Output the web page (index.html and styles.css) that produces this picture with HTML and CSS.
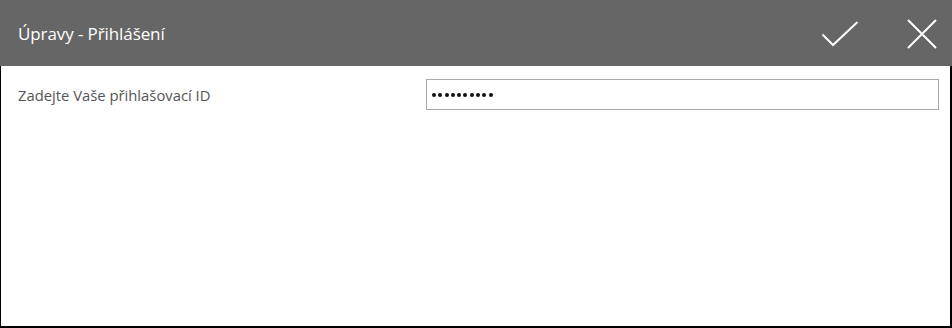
FILE: index.html
```html
<!DOCTYPE html>
<html lang="cs">
<head>
<meta charset="utf-8">
<link rel="stylesheet" href="styles.css">
</head>
<body>
<div class="dialog">
  <header class="bar">
    <h1 class="title">Úpravy - Přihlášení</h1>
    <div class="actions">
      <button class="btn" aria-label="OK">
        <svg width="38" height="26" viewBox="0 0 38 26"><path d="M1.5 13.5 L12 24 L36.5 1" fill="none" stroke="#fff" stroke-width="2"/></svg>
      </button>
      <button class="btn" aria-label="Zavřít">
        <svg width="30" height="30" viewBox="0 0 30 30"><path d="M1 1 L29 29 M29 1 L1 29" fill="none" stroke="#fff" stroke-width="2"/></svg>
      </button>
    </div>
  </header>
  <main class="content">
    <div class="row">
      <label class="label" for="pw">Zadejte Vaše přihlašovací ID</label>
      <div class="field" id="pw">
        <span class="dot"></span><span class="dot"></span><span class="dot"></span><span class="dot"></span><span class="dot"></span><span class="dot"></span><span class="dot"></span><span class="dot"></span><span class="dot"></span><span class="dot"></span>
      </div>
    </div>
  </main>
</div>
</body>
</html>
```
FILE: styles.css
```css
html, body {
  margin: 0;
  padding: 0;
  background: #fff;
}
body {
  font-family: "Open Sans", "Noto Sans", sans-serif;
}
.dialog {
  width: 952px;
  height: 328px;
  box-sizing: border-box;
  display: flex;
  flex-direction: column;
}
.bar {
  height: 66px;
  background: #666666;
  display: flex;
  align-items: center;
  justify-content: space-between;
  padding: 0 15px 0 18px;
  flex: none;
}
.title {
  margin: 0;
  font-weight: 400;
  font-size: 17px;
  color: #fff;
  letter-spacing: -0.1px;
}
.actions {
  display: flex;
  align-items: center;
  gap: 48px;
  padding-top: 1px;
}
.btn {
  background: none;
  border: 0;
  padding: 0;
  display: flex;
}
.content {
  flex: 1;
  border-left: 1px solid #000;
  border-right: 2px solid #000;
  border-bottom: 2px solid #000;
  padding: 13px 11px 0 17px;
}
.row {
  display: flex;
  align-items: flex-start;
}
.label {
  width: 408px;
  font-size: 14.8px;
  color: #555;
  padding-top: 6px;
}
.field {
  flex: 1;
  height: 31px;
  box-sizing: border-box;
  border: 1px solid #a9a9a9;
  display: flex;
  align-items: center;
  gap: 2.3px;
  padding-left: 5px;
}
.dot {
  width: 4px;
  height: 4px;
  border-radius: 50%;
  background: #111;
}
```
